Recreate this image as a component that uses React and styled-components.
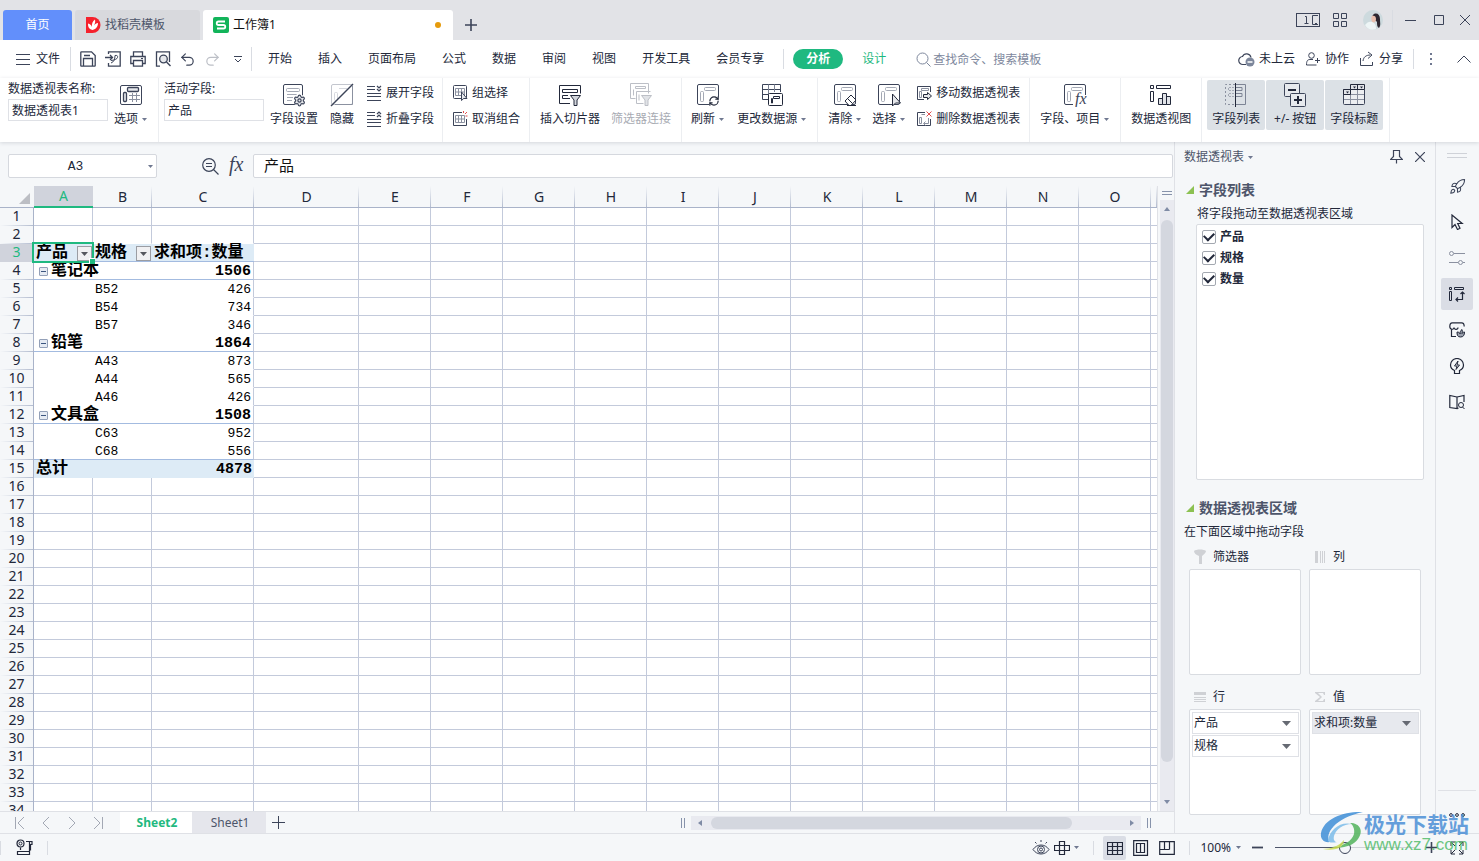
import React, { useState } from 'react';
import styled, { createGlobalStyle, css } from 'styled-components';
import { Settings, Rocket, RefreshCw, Undo2, Redo2 } from 'lucide-react';

const GlobalStyle = createGlobalStyle`
  * {
    box-sizing: border-box;
  }

  body {
    margin: 0;
    font-family: 'Noto Sans', 'Noto Sans CJK SC', sans-serif;
    font-size: 12px;
    line-height: 16px;
    color: #22283a;
    background: #f5f7f9;
  }

  button,
  input {
    font: inherit;
    color: inherit;
  }

  button {
    padding: 0;
    border: 0;
    background: none;
    white-space: nowrap;
  }

  svg {
    display: block;
    flex: none;
  }
`;

/* ---------- icons ---------- */

const Icon = ({ w = 16, h = w, box = `0 0 ${w} ${h}`, color = '#3c4459', children }) => (
  <svg width={w} height={h} viewBox={box} fill="none" stroke={color} strokeWidth="1" aria-hidden="true">
    {children}
  </svg>
);

const Caret = ({ color = '#6f7890' }) => (
  <Icon w={5} h={3} color="none">
    <path d="M0 0h5L2.5 3z" fill={color} />
  </Icon>
);

const PivotFrame = ({ light = '#a3a8b4' }) => (
  <>
    <rect x="1.5" y="1.5" width="21" height="20" rx="1.5" fill="#fff" />
    <rect x="8.5" y="4.5" width="11" height="3" rx="1" stroke={light} />
    <rect x="4.5" y="8.5" width="3" height="10" rx="1" stroke={light} />
  </>
);

const OptionsIcon = () => (
  <Icon w={24}>
    <rect x="1.5" y="2.5" width="21" height="19" rx="1.5" />
    <rect x="8.5" y="4.5" width="11" height="4" rx="1" fill="#e6e8ec" strokeWidth="1.3" />
    <rect x="4.5" y="9.5" width="3" height="9" rx="1" fill="#e6e8ec" strokeWidth="1.3" />
    <path d="M13.5 10v9M17.5 10v9M10 12.5h11M10 16.5h11" stroke="#8b91a0" />
  </Icon>
);

const FieldSettingsIcon = () => (
  <Icon w={24}>
    <rect x="1.5" y="1.5" width="19" height="20" rx="1.5" fill="#fff" />
    <rect x="4.5" y="5.5" width="13" height="3" rx="1" stroke="#a3a8b4" />
    <path d="M5 11.5h10M5 14.5h6M5 17.5h5" stroke="#a3a8b4" />
    <circle cx="17" cy="17" r="6" fill="#fff" stroke="none" />
    <Settings x="11" y="11" width="13" height="13" strokeWidth={2.2} color="#3c4459" fill="#e6e8ec" />
  </Icon>
);

const HideIcon = () => (
  <Icon w={24}>
    <rect x="1.5" y="1.5" width="21" height="20" rx="1.5" stroke="#c3c6ce" />
    <rect x="4.5" y="9.5" width="3" height="8" rx="1" stroke="#d5d7dd" />
    <path d="M9 5.5h8" stroke="#d5d7dd" />
    <path d="M22.5 3v18.5H5" stroke="#8b91a0" />
    <path d="M1 23L23 1" strokeWidth="1.4" />
  </Icon>
);

const ExpandIcon = ({ up }) => (
  <Icon>
    <path d="M1 1.5h8M1 4.5h8M1 8.5h14M1 11.5h14M1 15.5h14" />
    {up ? (
      <path d="M11 3l2-2 2 2M11 6l2-2 2 2" strokeWidth="1.2" />
    ) : (
      <path d="M11 1l2 2 2-2M11 4l2 2 2-2" strokeWidth="1.2" />
    )}
  </Icon>
);

const GroupIcon = () => (
  <Icon>
    <rect x="1.5" y="0.5" width="13" height="13" rx="1" />
    <path d="M3.5 3.5h9v7h-9zM6.5 3.5v7M9.5 3.5v7M3.5 7h9" stroke="#8b91a0" />
    <path d="M9.5 7v8.500l2.200-2h3.300z" fill="#e6e8ec" />
  </Icon>
);

const UngroupIcon = () => (
  <Icon>
    <path d="M10 1.5H1.5v13h13V8" />
    <path d="M3.5 4.5h9v7h-9zM6.5 4.5v7M9.5 4.5v7M3.5 8h9" stroke="#8b91a0" />
    <path d="M11.5 0v2M13 3l2-2M13.5 5h2" stroke="#e04f4f" />
  </Icon>
);

const Funnel = ({ fill = '#d3d6dc' }) => <path d="M12.5 12.5h10l-3.500 4.500v5.500h-3V17z" fill={fill} />;

const SlicerIcon = () => (
  <Icon w={24} color="#22283a">
    <path d="M22.5 10.500v-8h-21v18H12" />
    <path d="M4.5 6.500h15v3h-15zM10 12.500H4.500v3H12" />
    <Funnel />
  </Icon>
);

const FilterLinkIcon = () => (
  <Icon w={24} color="#bcbfc6">
    <path d="M19.5 10.500v-10h-18v15h5" />
    <path d="M7.5 15v-6.500h14M7.5 15v5.500h7M6.500 3.500h10v2h-10zM4.500 6.500v6M10 11.500v6" />
    <Funnel fill="#e1e3e7" />
  </Icon>
);

const RefreshIcon = () => (
  <Icon w={24}>
    <PivotFrame />
    <circle cx="18" cy="18" r="6" fill="#fff" stroke="none" />
    <RefreshCw x="12.5" y="12.5" width="11" height="11" strokeWidth={2.6} color="#22283a" />
  </Icon>
);

const SourceIcon = () => (
  <Icon w={24}>
    <path d="M8 16.500H2.500v-15h18V9M2.500 6.500h18M2.500 11.500h6" />
    <path d="M8.500 1.500v15M14.500 1.500V9" stroke="#7d8495" />
    <rect x="8.500" y="10.500" width="14" height="12" rx="1" fill="#fff" stroke="#22283a" />
    <path d="M13.500 13.500h6v2h-6zM11.500 15.500h1v4.500h-1z" stroke="#22283a" />
  </Icon>
);

const ClearIcon = () => (
  <Icon w={24}>
    <PivotFrame />
    <path d="M12 18l6-6 5 5-5 5.500h-2z" fill="#fff" stroke="#22283a" />
    <path d="M14.500 15.500l5 5M14 22.500h9" stroke="#22283a" />
  </Icon>
);

const SelectIcon = () => (
  <Icon w={24}>
    <PivotFrame />
    <path d="M15.500 11v12l3-3H23.500z" fill="#e6e8ec" stroke="#22283a" />
  </Icon>
);

const MovePivotIcon = () => (
  <Icon>
    <path d="M8 14.500H1.500v-13h13V7" />
    <path d="M5.500 3.500h7v2h-7zM3.500 6.500h2v6h-2z" stroke="#8b91a0" />
    <path d="M7.500 9.500h4V7.500l4 3.500-4 3.500v-2h-4z" fill="#e6e8ec" stroke="#22283a" />
  </Icon>
);

const DeletePivotIcon = () => (
  <Icon>
    <path d="M9 1.500H1.500v13h13V8" />
    <path d="M5.500 3.500H9M3.500 6.500h2v6h-2zM12.500 7v5.500H8M9.500 10.500l-2 2 2 2" stroke="#8b91a0" />
    <path d="M10.500 0.500l5 5M15.500 0.500l-5 5" stroke="#e04f4f" />
  </Icon>
);

const FxGlyph = styled.text`
  font-family: 'Liberation Serif', serif;
  font-size: ${(p) => p.$size}px;
  font-style: italic;
  stroke: none;
  fill: #3c4459;
`;

const CalcFieldIcon = () => (
  <Icon w={24}>
    <PivotFrame />
    <path d="M10 12h14v12H10z" fill="#fff" stroke="none" />
    <FxGlyph $size={16} x="12" y="21">fx</FxGlyph>
  </Icon>
);

const PivotChartIcon = () => (
  <Icon w={24} color="#22283a">
    <path d="M1.500 2.500h3v3h-3zM7.500 2.500h14v3h-14zM1.500 8.500h3v10h-3z" />
    <path d="M9.500 15.500h4v6h-4zM13.500 10.500h4v11h-4zM17.500 13.500h4v8h-4z" fill="#e1e3e8" />
  </Icon>
);

const FieldListIcon = () => (
  <Icon w={24}>
    <path d="M11 1.500H1.500v20H11" strokeDasharray="2 2" stroke="#8b91a0" />
    <path d="M12 1.500h9.500v20H12M12 4.500h6v3h-6M12 10.500h6v3h-6" stroke="#7d8495" />
    <path d="M10 4.500H4.500v3H10M10 10.500H4.500v3H10" strokeDasharray="2 1" stroke="#a3a8b4" />
    <path d="M11.500 0v24" stroke="#22283a" />
  </Icon>
);

const PlusMinusIcon = () => (
  <Icon w={24}>
    <rect x="1.500" y="0.500" width="15" height="13" rx="1" fill="#e6e9ed" />
    <rect x="7.500" y="10.500" width="15" height="13" rx="1" fill="#e6e9ed" />
    <path d="M5 7h8M11 17h8M15 13v8" stroke="#22283a" strokeWidth="2" />
  </Icon>
);

const FieldTitleIcon = () => (
  <Icon w={24}>
    <path d="M1.500 6.500h21v14a1 1 0 0 1-1 1h-19a1 1 0 0 1-1-1z" fill="#eceef1" />
    <path d="M8.500 6v15M15.500 6v15M2 11.500h20M2 16.500h20" stroke="#8b91a0" />
    <path d="M8.500 1.500h14v5h-14zM1.500 6.500h7v5h-7zM15.500 1.500v5" fill="#e1e3e8" stroke="#22283a" />
    <path d="M11 3.500h3l-1.500 2zM18 3.500h3l-1.500 2zM4 8.500h3l-1.500 2z" fill="#22283a" stroke="none" />
  </Icon>
);

const DocerLogo = () => (
  <Icon w={16} color="none">
    <path d="M1 0h6.500a8 8 0 0 1 0 16H1z" fill="#f5222d" />
    <path d="M7.500 13C3.500 12 3 9.500 3 6.500 5 7 6.500 8 7 10 6.500 7 7.500 4 10 2.500c.5 2.500 0 4-1 6 1-1.500 2.500-2.500 4-2.500 0 3-1.500 6-5.500 7z" fill="#fff" />
  </Icon>
);

const SheetLogo = () => (
  <Icon w={16} color="none">
    <rect width="16" height="16" rx="2" fill="#12b45a" />
    <path d="M12 4.500H5.500a1.700 1.700 0 0 0 0 3.500h5a1.700 1.700 0 0 1 0 3.500H4" stroke="#fff" strokeWidth="1.8" />
  </Icon>
);

const SaveIcon = () => (
  <Icon>
    <path d="M0.800 1.500a0.700 0.700 0 0 1 0.700-0.700h10l3.700 3.700v10a0.700 0.700 0 0 1-0.700 0.700h-13a0.700 0.700 0 0 1-0.700-0.700z" strokeWidth="1.3" />
    <path d="M3.500 15V7.500h9V15M4 4.500h6" strokeWidth="1.3" />
  </Icon>
);

const ExportIcon = () => (
  <Icon>
    <path d="M3.500 3V0.800h11.700v14.400H3.500V12" strokeWidth="1.3" />
    <path d="M0 6.500h7M5 4l2.500 2.500L5 9" strokeWidth="1.3" />
    <path d="M6 12c3-1 4-4 4-7.500 2-0.500 3 0.500 2.500 2S10 9 6 9.500" />
  </Icon>
);

const PrintIcon = () => (
  <Icon>
    <path d="M3.500 5V0.800h9V5M3 12.500H0.800V5.500h14.400v7H13" strokeWidth="1.3" />
    <path d="M3.500 9.500h9v5.700h-9z" strokeWidth="1.3" />
    <path d="M11 7.500h2" />
  </Icon>
);

const PreviewIcon = () => (
  <Icon>
    <path d="M5 15.200H1.500V0.800h13V11" strokeWidth="1.3" />
    <circle cx="8.500" cy="8" r="3.800" strokeWidth="1.3" fill="#e6e8ec" />
    <path d="M11.500 11l4 4" strokeWidth="1.5" />
  </Icon>
);

const MoreIcon = () => (
  <Icon w={8} h={7}>
    <path d="M0 0.500h8M1 3l3 3 3-3" />
  </Icon>
);

const CloudIcon = () => (
  <Icon w={17} h={15}>
    <path d="M8 12.500H5a4 4 0 0 1-0.500-8 4.500 4.500 0 0 1 8.500 1" strokeWidth="1.2" />
    <circle cx="12" cy="10" r="4.500" fill="#7c869b" stroke="none" />
    <path d="M9.500 10h5" stroke="#fff" strokeWidth="1.5" />
  </Icon>
);

const CollabIcon = () => (
  <Icon>
    <circle cx="6.500" cy="4.500" r="2.800" />
    <path d="M8 8.500H5c-2.500 0-3.500 1.500-3.500 5.500h10M10 9.500h5M12.500 7v5" />
  </Icon>
);

const ShareIcon = () => (
  <Icon>
    <path d="M1.500 7v7.500h12V11M4 10c0.500-4 3-6 7.500-6M9 1l4 3-4 3.500" />
  </Icon>
);

const RailIcon = ({ name }) => {
  switch (name) {
    case 'rocket':
      return <Rocket width={17} height={17} strokeWidth={1.5} color="#3c4459" />;
    case 'pointer':
      return (
        <Icon color="#22283a">
          <path d="M3 1v12.500l3-3 2.500 5 2.500-1.200-2.300-4.800h4.500z" strokeWidth="1.2" />
        </Icon>
      );
    case 'sliders':
      return (
        <Icon color="#8b91a0">
          <circle cx="2.500" cy="3.500" r="2" />
          <circle cx="11.500" cy="12.500" r="2" />
          <path d="M5 3.500h11M0 12.500h9M14 12.500h2" />
        </Icon>
      );
    case 'pivot':
      return (
        <Icon color="#22283a">
          <path d="M0.500 1.500h2v2h-2zM5.500 1.500h9v2h-9zM0.500 5.500h2v9h-2z" />
          <path d="M13.500 6v7.500H7M11.500 8l2-2 2 2M9 11.500l-2 2 2 2" strokeWidth="1.2" />
        </Icon>
      );
    case 'store':
      return (
        <Icon color="#22283a">
          <path d="M2.500 7v7.500H7M0.800 4.500c0-2 0.700-3.700 2.500-3.700h9.400c1.800 0 2.500 1.700 2.500 3.700M0.800 4.500c0 3.500 4.200 3.500 4.200 1 0 2.500 4 2.500 4 0" strokeWidth="1.2" />
          <path d="M11.500 15c-3 0-3.500-2-3.500-5 2 0 3 1 3 2 0-2 0.500-3.500 2-4.500 0.500 1 0.500 2.500 0 4 0.500-1 1.500-1.500 2.500-1.500 0 3-1 5-4 5z" fill="#9aa0ad" />
        </Icon>
      );
    case 'idea':
      return (
        <Icon color="#22283a">
          <path d="M5.500 12.500C3 11.500 1.500 9.500 1.500 7a6.500 6.500 0 0 1 13 0c0 2.500-1.500 4.500-4 5.500v3h-5z" strokeWidth="1.2" />
          <path d="M9 3L5.500 8H8l-1 3.500L10.500 7H8z" />
        </Icon>
      );
    default:
      return (
        <Icon color="#22283a">
          <path d="M8 3L0.800 1.500v12L8 14.500zM8 3l7-1.500V8M8 14.500l1.500-0.300" strokeWidth="1.2" />
          <circle cx="12" cy="11" r="2.500" />
          <path d="M13.500 13l2 2" />
        </Icon>
      );
  }
};

/* ---------- shell ---------- */

const Window = styled.div`
  position: relative;
  display: flex;
  flex-direction: column;
  height: 100vh;
  overflow: hidden;
`;

const Divider = styled.span`
  flex: none;
  width: 1px;
  height: ${(p) => p.$h || 20}px;
  background: #d9dce2;
`;

const Spacer = styled.div`
  flex: 1;
`;

const IconButton = styled.button`
  display: flex;
  align-items: center;
  justify-content: center;
  flex: none;
  width: ${(p) => p.$w}px;
  height: ${(p) => p.$h || 24}px;
`;

/* ---------- title bar ---------- */

const TitleBar = styled.header`
  display: flex;
  align-items: flex-end;
  flex: none;
  height: 40px;
  padding-left: 3px;
  background: #e2e3e7;
`;

const DocTab = styled.button`
  display: flex;
  align-items: center;
  justify-content: ${(p) => (p.$home ? 'center' : 'flex-start')};
  gap: 4px;
  width: ${(p) => p.$w}px;
  height: 30px;
  margin-right: 3px;
  padding: ${(p) => (p.$home ? 0 : '0 12px 0 10px')};
  border-radius: 3px 3px 0 0;
  color: ${(p) => (p.$home ? '#fff' : p.$active ? '#111' : '#4d556a')};
  background: ${(p) => (p.$home ? '#628ffb' : p.$active ? '#fff' : '#d8d9dd')};
`;

const UnsavedDot = styled.span`
  width: 6px;
  height: 6px;
  margin-left: auto;
  border-radius: 50%;
  background: #e69b0c;
`;

const WindowTools = styled.div`
  display: flex;
  align-items: center;
  height: 40px;
  margin-left: auto;
`;

const AvatarButton = styled(IconButton)`
  margin: 0 9px 0 7px;
`;

const TitleBarView = () => (
  <TitleBar>
    <DocTab $home $w={69}>首页</DocTab>
    <DocTab $w={125}>
      <DocerLogo />
      找稻壳模板
    </DocTab>
    <DocTab $active $w={250}>
      <SheetLogo />
      工作簿1
      <UnsavedDot />
    </DocTab>
    <IconButton $w={30} $h={30} aria-label="新建">
      <Icon w={12}>
        <path d="M6 0v12M0 6h12" strokeWidth="1.6" />
      </Icon>
    </IconButton>
    <WindowTools>
      <IconButton $w={32} aria-label="窗口">
        <Icon w={24} h={14}>
          <rect x="0.500" y="0.500" width="23" height="13" />
          <path d="M9 3.500h1.500v7M8.500 10.500h4M22 2.500h-5.500v9h5.500M19 10.500h2" />
        </Icon>
      </IconButton>
      <IconButton $w={32} aria-label="应用">
        <Icon w={14}>
          <path d="M0.500 0.500h5v5h-5zM8.500 0.500h5v5h-5zM0.500 8.500h5v5h-5zM8.500 8.500h5v5h-5z" />
        </Icon>
      </IconButton>
      <AvatarButton $w={20} aria-label="账号">
        <Icon w={20} color="none">
          <circle cx="10" cy="10" r="10" fill="#cddade" />
          <path d="M11 4c3-1.500 6 0.500 6 5s1 6-1 9c-2-1-2-3-2-6-1-2-3-1-4-2-1-2-1-5 1-6z" fill="#2c2630" />
          <path d="M9 6c2-1 4 0 4 3s-2 4-3.500 3S8 7 9 6z" fill="#e8bfae" />
          <path d="M2 15c2-3 5-4 7-3 3 1 4 3 4 7-4 2-9 0-11-4z" fill="#eef5f6" />
        </Icon>
      </AvatarButton>
      <Divider $h={20} />
      <IconButton $w={34} aria-label="最小化">
        <Icon w={11}>
          <path d="M0 5.500h11" />
        </Icon>
      </IconButton>
      <IconButton $w={24} aria-label="最大化">
        <Icon w={10}>
          <path d="M0.500 0.500h9v9h-9z" />
        </Icon>
      </IconButton>
      <IconButton $w={28} aria-label="关闭">
        <Icon w={10}>
          <path d="M0 0l10 10M10 0L0 10" />
        </Icon>
      </IconButton>
    </WindowTools>
  </TitleBar>
);

/* ---------- menu bar ---------- */

const MenuBar = styled.nav`
  display: flex;
  align-items: center;
  flex: none;
  height: 38px;
  background: #fff;
`;

const FileButton = styled.button`
  display: flex;
  align-items: center;
  gap: 6px;
  margin: 0 10px 0 16px;
`;

const QuickTools = styled.div`
  display: flex;
  padding: 0 1px 0 4px;
`;

const MenuList = styled.div`
  display: flex;
  gap: 26px;
  padding: 0 19px 0 16px;
`;

const ContextTab = styled.button`
  margin-left: ${(p) => (p.$active ? 9 : 6)}px;
  width: 50px;
  height: 20px;
  border-radius: 10px;
  color: ${(p) => (p.$active ? '#fff' : '#1fb980')};
  font-weight: ${(p) => (p.$active ? 700 : 400)};
  background: ${(p) => (p.$active ? '#1fb980' : 'transparent')};
`;

const Search = styled.label`
  display: flex;
  align-items: center;
  gap: 2px;
  margin-left: 17px;

  input {
    width: 130px;
    height: 20px;
    padding: 0;
    border: 0;
    outline: 0;
    background: none;
  }

  input::placeholder {
    color: #7e889d;
    opacity: 1;
  }
`;

const CloudButton = styled.button`
  display: flex;
  align-items: center;
  gap: 4px;
  margin-right: 10px;
`;

const MENUS = ['开始', '插入', '页面布局', '公式', '数据', '审阅', '视图', '开发工具', '会员专享'];

const MenuBarView = () => (
  <MenuBar>
    <FileButton>
      <Icon w={14}>
        <path d="M0 2.500h14M0 7.500h14M0 12.500h14" />
      </Icon>
      文件
    </FileButton>
    <Divider $h={24} />
    <QuickTools>
      <IconButton $w={25} aria-label="保存"><SaveIcon /></IconButton>
      <IconButton $w={25} aria-label="输出为PDF"><ExportIcon /></IconButton>
      <IconButton $w={25} aria-label="打印"><PrintIcon /></IconButton>
      <IconButton $w={25} aria-label="打印预览"><PreviewIcon /></IconButton>
      <IconButton $w={25} aria-label="撤销"><Undo2 size={17} strokeWidth={1.7} color="#3c4459" /></IconButton>
      <IconButton $w={25} aria-label="恢复"><Redo2 size={17} strokeWidth={1.7} color="#bcbfc6" /></IconButton>
      <IconButton $w={25} aria-label="更多"><MoreIcon /></IconButton>
    </QuickTools>
    <Divider $h={24} />
    <MenuList>
      {MENUS.map((name) => (
        <button key={name}>{name}</button>
      ))}
    </MenuList>
    <Divider />
    <ContextTab $active>分析</ContextTab>
    <ContextTab>设计</ContextTab>
    <Search>
      <Icon w={15} color="#7e889d">
        <circle cx="6.500" cy="6.500" r="5.500" />
        <path d="M10.500 10.500l4 4" />
      </Icon>
      <input placeholder="查找命令、搜索模板" aria-label="搜索" />
    </Search>
    <Spacer />
    <CloudButton><CloudIcon />未上云</CloudButton>
    <CloudButton><CollabIcon />协作</CloudButton>
    <CloudButton><ShareIcon />分享</CloudButton>
    <Divider />
    <IconButton $w={34} aria-label="更多选项">
      <Icon w={2} h={12} color="none">
        <path d="M0 0h2v2H0zM0 5h2v2H0zM0 10h2v2H0z" fill="#6f7890" />
      </Icon>
    </IconButton>
    <IconButton $w={31} aria-label="折叠功能区">
      <Icon w={14} h={8}>
        <path d="M0.500 7.500L7 1l6.500 6.500" />
      </Icon>
    </IconButton>
  </MenuBar>
);

/* ---------- ribbon ---------- */

const Ribbon = styled.section`
  position: relative;
  z-index: 1;
  display: flex;
  flex: none;
  height: 64px;
  background: #fff;
  box-shadow: 0 1px 4px rgba(40, 50, 70, 0.16);
`;

const Group = styled.div`
  display: flex;
  align-items: flex-start;
  gap: ${(p) => p.$gap || 11}px;
  padding: 2px ${(p) => p.$end || 10}px 0 ${(p) => p.$start || 10}px;
  border-right: 1px solid #eceef1;
`;

const ButtonRow = styled.div`
  display: flex;
  gap: 12px;
`;

const Field = styled.label`
  display: flex;
  flex-direction: column;
  gap: 2px;
  width: 100px;
  padding-top: 1px;
  white-space: nowrap;

  input {
    width: 100px;
    height: 22px;
    padding: 0 3px;
    border: 1px solid #dfe1e6;
    background: #fff;
  }
`;

const BigButtonBox = styled.button`
  display: flex;
  flex-direction: column;
  align-items: center;
  gap: 4px;
  height: 50px;
  padding-top: 3px;
  border-radius: 2px;
  color: ${(p) => (p.disabled ? '#a8abb3' : 'inherit')};

  ${(p) =>
    p.$toggled &&
    css`
      width: 58px;
      background: #dce1e6;
    `}

  span {
    display: flex;
    align-items: center;
    gap: 4px;
  }
`;

const BigButton = ({ icon, label, menu, toggled, disabled }) => (
  <BigButtonBox $toggled={toggled} disabled={disabled} aria-pressed={toggled}>
    {icon}
    <span>
      {label}
      {menu && <Caret />}
    </span>
  </BigButtonBox>
);

const Stack = styled.div`
  display: flex;
  flex-direction: column;
  gap: 1px;

  button {
    display: flex;
    align-items: center;
    gap: 4px;
    height: 25px;
  }
`;

const RibbonView = () => (
  <Ribbon>
    <Group $gap={6} $start={8} $end={11}>
      <Field>
        数据透视表名称:
        <input defaultValue="数据透视表1" />
      </Field>
      <BigButton icon={<OptionsIcon />} label="选项" menu />
    </Group>
    <Group $gap={6} $start={5} $end={8}>
      <Field>
        活动字段:
        <input defaultValue="产品" />
      </Field>
      <ButtonRow>
        <BigButton icon={<FieldSettingsIcon />} label="字段设置" />
        <BigButton icon={<HideIcon />} label="隐藏" />
        <Stack>
          <button><ExpandIcon />展开字段</button>
          <button><ExpandIcon up />折叠字段</button>
        </Stack>
      </ButtonRow>
    </Group>
    <Group $start={9} $end={9}>
      <Stack>
        <button><GroupIcon />组选择</button>
        <button><UngroupIcon />取消组合</button>
      </Stack>
    </Group>
    <Group>
      <BigButton icon={<SlicerIcon />} label="插入切片器" />
      <BigButton icon={<FilterLinkIcon />} label="筛选器连接" disabled />
    </Group>
    <Group $start={9} $gap={13} $end={11}>
      <BigButton icon={<RefreshIcon />} label="刷新" menu />
      <BigButton icon={<SourceIcon />} label="更改数据源" menu />
    </Group>
    <Group $end={9}>
      <BigButton icon={<ClearIcon />} label="清除" menu />
      <BigButton icon={<SelectIcon />} label="选择" menu />
      <Stack>
        <button><MovePivotIcon />移动数据透视表</button>
        <button><DeletePivotIcon />删除数据透视表</button>
      </Stack>
    </Group>
    <Group $end={11}>
      <BigButton icon={<CalcFieldIcon />} label="字段、项目" menu />
    </Group>
    <Group>
      <BigButton icon={<PivotChartIcon />} label="数据透视图" />
    </Group>
    <Group $gap={1} $start={5} $end={6}>
      <BigButton icon={<FieldListIcon />} label="字段列表" toggled />
      <BigButton icon={<PlusMinusIcon />} label="+/- 按钮" toggled />
      <BigButton icon={<FieldTitleIcon />} label="字段标题" toggled />
    </Group>
  </Ribbon>
);

/* ---------- formula bar ---------- */

const Workspace = styled.div`
  display: grid;
  grid-template-columns: minmax(0, 1fr) 261px 44px;
  flex: 1;
  min-height: 0;
`;

const SheetArea = styled.main`
  display: flex;
  flex-direction: column;
  min-height: 0;
`;

const FormulaBar = styled.div`
  display: flex;
  align-items: center;
  flex: none;
  height: 44px;
  padding: 4px 1px 0 8px;
`;

const NameBox = styled.div`
  display: flex;
  align-items: center;
  width: 149px;
  height: 24px;
  padding-right: 3px;
  border: 1px solid #d5d8de;
  border-radius: 2px;
  background: #fff;

  input {
    flex: 1;
    min-width: 0;
    padding: 2px 6px 0 0;
    border: 0;
    outline: 0;
    font-family: 'Liberation Mono', monospace;
    font-size: 13px;
    text-align: center;
    background: none;
  }
`;

const FormulaTools = styled.div`
  display: flex;
  padding: 0 4px 0 41px;
`;

const FormulaInput = styled.input`
  flex: 1;
  min-width: 0;
  height: 24px;
  padding: 0 10px 4px;
  border: 1px solid #d5d8de;
  border-radius: 2px;
  outline: 0;
  font-size: 15px;
  color: #111;
  background: #fff;
`;

/* ---------- grid ---------- */

const GridRow = styled.div`
  display: flex;
  flex: 1;
  min-height: 0;
`;

const GridClip = styled.div`
  flex: 1;
  min-width: 0;
  overflow: hidden;
`;

const SheetTable = styled.table`
  width: 100%;
  table-layout: fixed;
  border-spacing: 0;
  background: #fff;
`;

const ColHead = styled.th`
  height: 22px;
  padding: 0;
  border-bottom: ${(p) => (p.$on ? '2px solid #1fb980' : '1px solid #a9b3c9')};
  font-size: 14px;
  font-weight: 400;
  color: ${(p) => (p.$on ? '#1fb980' : '#22283a')};
  background: ${(p) =>
    p.$on
      ? '#d0d3dc'
      : 'linear-gradient(#f5f7f9, #b4bdd0) right / 1px 100% no-repeat, #f5f7f9'};
`;

const RowHead = styled.th`
  height: 18px;
  padding: 0 0 3px;
  border-right: 1px solid #a9b3c9;
  font-size: 14px;
  font-weight: 400;
  line-height: 15px;
  color: ${(p) => (p.$on ? '#1fb980' : '#22283a')};
  background: ${(p) =>
    p.$on
      ? '#d0d3dc'
      : 'linear-gradient(90deg, #f5f7f9, #b4bdd0) bottom / 100% 1px no-repeat, #f5f7f9'};
`;

const Corner = styled.th`
  padding: 0 4px 3px 0;
  border-bottom: 1px solid #a9b3c9;
  vertical-align: bottom;
  background: #f5f7f9;

  svg {
    margin-left: auto;
  }
`;

const Cell = styled.td`
  position: relative;
  height: 18px;
  padding: 2px 2px 0;
  border-right: ${(p) => (p.$open ? '0' : '1px solid #c3cadb')};
  border-bottom: 1px solid ${(p) => (p.$rule ? '#a3bbe0' : p.$flat ? 'transparent' : '#c3cadb')};
  font-family: 'Liberation Mono', 'Noto Sans CJK SC', monospace;
  font-size: ${(p) => (p.$bold ? 15 : 13)}px;
  font-weight: ${(p) => (p.$bold ? 700 : 400)};
  line-height: 15px;
  text-align: ${(p) => (p.$num ? 'right' : 'left')};
  vertical-align: bottom;
  white-space: nowrap;
  color: #000;
  background: ${(p) => (p.$fill ? '#ddebf6' : 'transparent')};
`;

const CellLine = styled.div`
  display: flex;
  align-items: center;
  gap: 3px;
  height: 15px;
  padding-left: ${(p) => p.$inset || 0}px;
  font-size: 16px;
  line-height: 17px;
`;

const FilterButton = styled.button`
  display: flex;
  align-items: center;
  justify-content: center;
  width: 15px;
  height: 15px;
  margin: 0 -1px 0 auto;
  border: 1px solid #9b9da3;
  background: #f0f0f2;
`;

const FoldButton = styled.button`
  display: flex;
  align-items: center;
  justify-content: center;
  flex: none;
  width: 9px;
  height: 9px;
  border: 1px solid #93a0b8;
  border-radius: 1px;
  background: #e6ebf3;
`;

const Selection = styled.span`
  position: absolute;
  inset: -2px -1px -2px -2px;
  z-index: 1;
  border: 2px solid #1fb980;
  pointer-events: none;

  &::after {
    content: '';
    position: absolute;
    right: -3px;
    bottom: -3px;
    width: 5px;
    height: 5px;
    border-top: 1px solid #fff;
    border-left: 1px solid #fff;
    background: #1fb980;
  }
`;

const COLUMNS = 'ABCDEFGHIJKLMNO'.split('');
const COLUMN_WIDTHS = { A: 59, B: 59, C: 102, D: 105 };
const ROW_COUNT = 34;

const PIVOT = {
  3: { kind: 'head' },
  4: { kind: 'group', name: '笔记本', total: 1506 },
  5: { kind: 'item', name: 'B52', total: 426 },
  6: { kind: 'item', name: 'B54', total: 734 },
  7: { kind: 'item', name: 'B57', total: 346 },
  8: { kind: 'group', name: '铅笔', total: 1864 },
  9: { kind: 'item', name: 'A43', total: 873 },
  10: { kind: 'item', name: 'A44', total: 565 },
  11: { kind: 'item', name: 'A46', total: 426 },
  12: { kind: 'group', name: '文具盒', total: 1508 },
  13: { kind: 'item', name: 'C63', total: 952 },
  14: { kind: 'item', name: 'C68', total: 556, last: true },
  15: { kind: 'total', name: '总计', total: 4878 },
};

const Filter = ({ label }) => (
  <FilterButton aria-label={label}>
    <Icon w={7} h={4} color="none">
      <path d="M0 0h7L3.500 4z" fill="#55575e" />
    </Icon>
  </FilterButton>
);

const PivotCells = ({ row }) => {
  const { kind, name, total, last } = row;
  if (kind === 'head') {
    return (
      <>
        <Cell $open $rule $fill $bold>
          <CellLine>产品<Filter label="筛选产品" /></CellLine>
          <Selection />
        </Cell>
        <Cell $open $rule $fill $bold>
          <CellLine>规格<Filter label="筛选规格" /></CellLine>
        </Cell>
        <Cell $open $rule $fill $bold>
          <CellLine>求和项:数量</CellLine>
        </Cell>
      </>
    );
  }
  if (kind === 'item') {
    return (
      <>
        <Cell $open $flat $rule={last} />
        <Cell $open $flat $rule={last}>{name}</Cell>
        <Cell $flat $rule={last} $num>{total}</Cell>
      </>
    );
  }
  const isTotal = kind === 'total';
  return (
    <>
      <Cell $open $flat $rule={!isTotal} $fill={isTotal} $bold>
        <CellLine $inset={isTotal ? 0 : 3}>
          {!isTotal && (
            <FoldButton aria-label="折叠">
              <Icon w={5} h={1} color="none">
                <path d="M0 0h5v1H0z" fill="#3c5680" />
              </Icon>
            </FoldButton>
          )}
          {name}
        </CellLine>
      </Cell>
      <Cell $open $flat $rule={!isTotal} $fill={isTotal} />
      <Cell $open={isTotal} $flat $rule={!isTotal} $fill={isTotal} $bold $num>{total}</Cell>
    </>
  );
};

const Grid = () => (
  <SheetTable>
    <colgroup>
      <col width={34} />
      {COLUMNS.map((c) => (
        <col key={c} width={COLUMN_WIDTHS[c] || 72} />
      ))}
      <col />
    </colgroup>
    <thead>
      <tr>
        <Corner>
          <Icon w={11} color="none">
            <path d="M11 0v11H0z" fill="#bcbec4" />
          </Icon>
        </Corner>
        {COLUMNS.map((c) => (
          <ColHead key={c} $on={c === 'A'}>{c}</ColHead>
        ))}
        <ColHead />
      </tr>
    </thead>
    <tbody>
      {Array.from({ length: ROW_COUNT }, (_, i) => i + 1).map((n) => (
        <tr key={n}>
          <RowHead $on={n === 3}>{n}</RowHead>
          {PIVOT[n] ? (
            <PivotCells row={PIVOT[n]} />
          ) : (
            ['A', 'B', 'C'].map((c) => <Cell key={c} $flat={n === 2} />)
          )}
          {COLUMNS.slice(3).map((c) => (
            <Cell key={c} />
          ))}
          <Cell $open />
        </tr>
      ))}
    </tbody>
  </SheetTable>
);

const VerticalBar = styled.div`
  display: flex;
  flex-direction: column;
  align-items: center;
  flex: none;
  width: 17px;
  padding: 4px 1px 0 2px;
  border-left: 1px solid #dfe1e6;
`;

const ScrollTrack = styled.div`
  display: flex;
  flex-direction: ${(p) => (p.$row ? 'row' : 'column')};
  align-items: center;
  gap: 9px;
  flex: 1;
  width: ${(p) => (p.$row ? 'auto' : '14px')};
  height: ${(p) => (p.$row ? '14px' : 'auto')};
  padding: ${(p) => (p.$row ? '0 7px' : '7px 0')};
  background: #e9eaf0;
`;

const ScrollThumb = styled.div`
  flex: ${(p) => p.$size} 0 0;
  ${(p) => (p.$row ? 'height: 12px;' : 'width: 12px;')}
  border-radius: 6px;
  background: #d4d7df;
`;

const ScrollGap = styled.div`
  flex: ${(p) => p.$size} 0 0;
`;

/* ---------- sheet tabs ---------- */

const SheetTabs = styled.div`
  display: flex;
  align-items: center;
  flex: none;
  height: 23px;
  border-top: 1px solid #dfe1e6;
  border-bottom: 1px solid #dfe1e6;
`;

const SheetNav = styled.div`
  display: flex;
  padding: 0 9px 0 7px;
`;

const SheetTab = styled.button`
  width: ${(p) => (p.$active ? 72 : 74)}px;
  height: 21px;
  padding-left: 2px;
  font-weight: ${(p) => (p.$active ? 700 : 400)};
  color: ${(p) => (p.$active ? '#1fb980' : '#4d556a')};
  background: ${(p) => (p.$active ? '#fff' : '#e5e6ec')};
`;

const HorizontalBar = styled.div`
  display: flex;
  align-items: center;
  gap: 6px;
  flex: 0 0 42%;
  margin-left: auto;
  padding-right: 23px;
`;

const Arrow = ({ dir }) => {
  const paths = { up: 'M0 4h6L3 0z', down: 'M0 0h6L3 4z', left: 'M4 0v6L0 3z', right: 'M0 0v6l4-3z' };
  const tall = dir === 'left' || dir === 'right';
  return (
    <Icon w={tall ? 4 : 6} h={tall ? 6 : 4} color="none">
      <path d={paths[dir]} fill="#7f8ba5" />
    </Icon>
  );
};

const SplitMark = () => (
  <Icon w={4} h={10} color="#8793ab">
    <path d="M0.500 0v10M3.500 0v10" />
  </Icon>
);

const NAV_PATHS = [
  ['首张', 'M0.500 0v12M9 0L3 6l6 6'],
  ['上一张', 'M8 0L2 6l6 6'],
  ['下一张', 'M2 0l6 6-6 6'],
  ['末张', 'M1 0l6 6-6 6M9.500 0v12'],
];

const SheetView = () => (
  <SheetArea>
    <FormulaBar>
      <NameBox>
        <input defaultValue="A3" aria-label="名称框" />
        <button aria-label="名称列表"><Caret /></button>
      </NameBox>
      <FormulaTools>
        <IconButton $w={25} aria-label="查找">
          <Icon w={17}>
            <circle cx="7" cy="7" r="6.300" strokeWidth="1.2" />
            <path d="M4 5.500h6M4 8.500h6M11.500 11.500l5 5" strokeWidth="1.2" />
          </Icon>
        </IconButton>
        <IconButton $w={26} aria-label="插入函数">
          <Icon w={16} h={20}>
            <FxGlyph $size={20} x="1" y="15">fx</FxGlyph>
          </Icon>
        </IconButton>
      </FormulaTools>
      <FormulaInput defaultValue="产品" aria-label="编辑栏" />
    </FormulaBar>
    <GridRow>
      <GridClip>
        <Grid />
      </GridClip>
      <VerticalBar>
        <Icon w={10} h={10} color="#8793ab">
          <path d="M0 1.500h10M0 4.500h10" />
        </Icon>
        <ScrollTrack>
          <Arrow dir="up" />
          <ScrollThumb $size={544} />
          <ScrollGap $size={20} />
          <Arrow dir="down" />
        </ScrollTrack>
      </VerticalBar>
    </GridRow>
    <SheetTabs>
      <SheetNav>
        {NAV_PATHS.map(([label, d]) => (
          <IconButton key={label} $w={26} aria-label={label}>
            <Icon w={10} h={12} color="#a3a8b4">
              <path d={d} />
            </Icon>
          </IconButton>
        ))}
      </SheetNav>
      <SheetTab $active>Sheet2</SheetTab>
      <SheetTab>Sheet1</SheetTab>
      <IconButton $w={24} aria-label="新建工作表">
        <Icon w={13}>
          <path d="M6.500 0v13M0 6.500h13" />
        </Icon>
      </IconButton>
      <HorizontalBar>
        <SplitMark />
        <ScrollTrack $row>
          <Arrow dir="left" />
          <ScrollThumb $row $size={364} />
          <ScrollGap $size={40} />
          <Arrow dir="right" />
        </ScrollTrack>
        <SplitMark />
      </HorizontalBar>
    </SheetTabs>
  </SheetArea>
);

/* ---------- pivot panel ---------- */

const Panel = styled.aside`
  display: flex;
  flex-direction: column;
  min-height: 0;
  padding: 7px 3px 18px 9px;
  border-left: 1px solid #dfe1e6;
  border-bottom: 1px solid #dfe1e6;
`;

const PanelHead = styled.div`
  display: flex;
  align-items: center;
  height: 16px;
  margin-bottom: 15px;
  color: #4d556a;

  button {
    display: flex;
    align-items: center;
    gap: 4px;
  }
`;

const PanelTitle = styled.h2`
  display: flex;
  align-items: center;
  gap: 5px;
  margin: 0;
  padding-left: 2px;
  font-size: 14px;
  line-height: 20px;
  color: #4d556a;
`;

const PanelNote = styled.p`
  margin: 6px 0 2px ${(p) => p.$inset}px;
`;

const FieldBox = styled.div`
  flex: 1;
  min-height: 80px;
  margin: 0 8px 18px 12px;
  padding: 1px 5px;
  border: 1px solid #d9dce1;
  border-radius: 2px;
  background: #fff;
`;

const CheckRow = styled.label`
  display: flex;
  align-items: center;
  gap: 4px;
  height: 21px;
  font-weight: 700;

  input {
    display: grid;
    place-items: center;
    width: 14px;
    height: 14px;
    margin: 0;
    border: 1px solid #a3a8b0;
    border-radius: 2px;
    appearance: none;
    background: #fff;
  }

  input:checked::after {
    content: '';
    width: 8px;
    height: 5px;
    margin-bottom: 3px;
    border: solid #22283a;
    border-width: 0 0 2px 2px;
    transform: rotate(-45deg);
  }
`;

const Zones = styled.div`
  display: grid;
  grid-template-columns: 1fr 1fr;
  column-gap: 8px;
  row-gap: 10px;
  margin-top: 3px;
  padding: 0 11px 0 5px;
`;

const ZoneHead = styled.div`
  display: flex;
  align-items: center;
  gap: 5px;
  height: 24px;
  padding-left: 3px;
`;

const ZoneBox = styled.div`
  display: flex;
  flex-direction: column;
  gap: 1px;
  height: 106px;
  padding: 2px 1px 2px 2px;
  border: 1px solid #d9dce1;
  border-radius: 2px;
  background: #fff;
`;

const ZoneItem = styled.button`
  display: flex;
  align-items: center;
  justify-content: space-between;
  height: 22px;
  padding: 0 7px 0 1px;
  border: 1px solid #dfe1e6;
  background: ${(p) => (p.$on ? '#e7e9ee' : '#fff')};
`;

const ZONES = [
  { name: '筛选器', icon: <path d="M2 2c2-2 10-2 12 0 0 2-2 3-4 5v8H7V7C4 6 2 4 2 2z" fill="#cfd1d5" /> },
  { name: '列', icon: <path d="M3 2h3v12H3zM8 2h1v12H8zM10 2h1v12h-1zM12 2h1v12h-1z" fill="#cfd1d5" /> },
  { name: '行', icon: <path d="M2 3h12v3H2zM2 8h12v1H2zM2 10h12v1H2zM2 12h12v1H2z" fill="#cfd1d5" />, items: ['产品', '规格'] },
  { name: '值', icon: <path d="M3 3h10v3h-1l-1-2H6l4 4-4 4h5l1-2h1v3H3v-1l5-4-5-4z" fill="#cfd1d5" />, items: ['求和项:数量'] },
];

const PivotPanel = () => {
  const [fields, setFields] = useState({ 产品: true, 规格: true, 数量: true });
  const toggle = (name) => setFields({ ...fields, [name]: !fields[name] });

  return (
    <Panel>
      <PanelHead>
        <button>数据透视表<Caret /></button>
        <Spacer />
        <IconButton $w={24} aria-label="固定">
          <Icon w={13} h={14}>
            <path d="M3.500 0.500h6v6l3 3H0.500l3-3zM6.500 9.500v4" strokeWidth="1.2" />
          </Icon>
        </IconButton>
        <IconButton $w={24} aria-label="关闭面板">
          <Icon w={10}>
            <path d="M0 0l10 10M10 0L0 10" strokeWidth="1.2" />
          </Icon>
        </IconButton>
      </PanelHead>
      <PanelTitle>
        <Icon w={8} color="none"><path d="M8 0v8H0z" fill="#8cc152" /></Icon>
        字段列表
      </PanelTitle>
      <PanelNote $inset={13}>将字段拖动至数据透视表区域</PanelNote>
      <FieldBox>
        {Object.keys(fields).map((name) => (
          <CheckRow key={name}>
            <input type="checkbox" checked={fields[name]} onChange={() => toggle(name)} />
            {name}
          </CheckRow>
        ))}
      </FieldBox>
      <PanelTitle>
        <Icon w={8} color="none"><path d="M8 0v8H0z" fill="#8cc152" /></Icon>
        数据透视表区域
      </PanelTitle>
      <PanelNote $inset={0}>在下面区域中拖动字段</PanelNote>
      <Zones>
        {ZONES.map((zone) => (
          <div key={zone.name}>
            <ZoneHead>
              <Icon color="none">{zone.icon}</Icon>
              {zone.name}
            </ZoneHead>
            <ZoneBox>
              {(zone.items || []).map((item) => (
                <ZoneItem key={item} $on={zone.name === '值'}>
                  {item}
                  <Icon w={9} h={5} color="none">
                    <path d="M0 0h9L4.500 5z" fill="#666a73" />
                  </Icon>
                </ZoneItem>
              ))}
            </ZoneBox>
          </div>
        ))}
      </Zones>
    </Panel>
  );
};

/* ---------- side rail ---------- */

const Rail = styled.aside`
  display: flex;
  flex-direction: column;
  align-items: center;
  gap: 4px;
  min-height: 0;
  padding: 11px 1px 0 0;
  border-left: 1px solid #dfe1e6;
  border-bottom: 1px solid #dfe1e6;
`;

const RailHandle = styled.div`
  width: 20px;
  height: 5px;
  margin-bottom: 8px;
  border: solid #cfd2d8;
  border-width: 1px 0;
`;

const RailButton = styled.button`
  display: flex;
  align-items: center;
  justify-content: center;
  width: 32px;
  height: 32px;
  border-radius: 2px;
  background: ${(p) => (p.$on ? '#dadde5' : 'transparent')};
`;

const RailFoot = styled.div`
  display: flex;
  justify-content: center;
  width: 38px;
  height: 43px;
  margin-top: auto;
  padding-top: 22px;
  border-top: 1px solid #dfe1e6;
`;

const RAIL = [
  ['rocket', '新功能'],
  ['pointer', '选择'],
  ['sliders', '属性'],
  ['pivot', '透视表'],
  ['store', '资源'],
  ['idea', '技巧'],
  ['book', '帮助'],
];

const SideRail = () => (
  <Rail>
    <RailHandle />
    {RAIL.map(([name, label]) => (
      <RailButton key={name} $on={name === 'pivot'} aria-label={label}>
        <RailIcon name={name} />
      </RailButton>
    ))}
    <RailFoot>
      <Icon w={16} h={4} color="#22283a">
        <circle cx="2" cy="2" r="1.400" />
        <circle cx="8" cy="2" r="1.400" />
        <circle cx="14" cy="2" r="1.400" />
      </Icon>
    </RailFoot>
  </Rail>
);

/* ---------- status bar ---------- */

const StatusBar = styled.footer`
  display: flex;
  align-items: center;
  flex: none;
  height: 27px;
  padding-right: 12px;
`;

const ViewButton = styled(IconButton)`
  width: 23px;
  margin-right: ${(p) => p.$after || 0}px;
  border-radius: 2px;
  background: ${(p) => (p.$on ? '#dadde5' : 'transparent')};
`;

const StatusMenu = styled.button`
  display: flex;
  align-items: center;
  gap: ${(p) => p.$gap}px;
  margin: 0 ${(p) => p.$after}px 0 0;
`;

const StatusDivider = styled(Divider)`
  margin: 0 ${(p) => p.$after}px 0 0;
`;

const ZoomSlider = styled.input`
  width: 140px;
  height: 14px;
  margin: 0 0 0 12px;
  appearance: none;
  background: linear-gradient(90deg, #4d556a 50%, #cfd2d8 50%) center / 100% 1px no-repeat;

  &::-webkit-slider-thumb {
    width: 12px;
    height: 12px;
    border: 1px solid #3c4459;
    border-radius: 50%;
    appearance: none;
    background: #f5f7f9;
  }
`;

const StatusBarView = () => (
  <StatusBar>
    <Divider $h={14} />
    <IconButton $w={46} aria-label="宏">
      <Icon w={17} color="#22283a">
        <circle cx="4.500" cy="4.500" r="3.500" strokeWidth="1.2" />
        <circle cx="4.500" cy="4.500" r="1.500" />
        <path d="M10 2.500h6v3h-1.500v6M13.500 2.500V12M4.500 8.500v2.500M1.500 12.500h12v3h-12z" strokeWidth="1.2" />
      </Icon>
    </IconButton>
    <Divider $h={14} />
    <Spacer />
    <ViewButton $after={2} aria-label="护眼模式">
      <Icon w={18} h={16}>
        <path d="M1 9.500c4-6 12-6 16 0-4 6-12 6-16 0zM9 0v2M3 2l1.500 1.500M15 2l-1.500 1.500" />
        <circle cx="9" cy="9.500" r="3.500" />
        <circle cx="9" cy="9.500" r="1.500" />
      </Icon>
    </ViewButton>
    <StatusMenu $gap={4} $after={14} aria-label="阅读模式">
      <Icon color="#22283a">
        <path d="M5.500 1.500h5v13h-5zM0.500 5.500h15v5H0.500z" strokeWidth="1.2" />
      </Icon>
      <Caret />
    </StatusMenu>
    <StatusDivider $h={14} $after={9} />
    <ViewButton $on $after={3} aria-label="普通视图">
      <Icon color="#22283a">
        <path d="M0.500 2.500h15v12H0.500zM5.500 2.500v12M10.500 2.500v12M0.500 6.500h15M0.500 10.500h15" strokeWidth="1.2" />
      </Icon>
    </ViewButton>
    <ViewButton $after={3} aria-label="页面布局视图">
      <Icon color="#22283a">
        <path d="M0.700 0.700h13.800v14.600H0.700zM3.500 3.500h8v9h-8zM7.500 3.500v9" strokeWidth="1.2" />
      </Icon>
    </ViewButton>
    <ViewButton $after={11} aria-label="分页预览">
      <Icon color="#22283a">
        <path d="M0.700 1.700h14.600v12.600H0.700zM5.500 2v7.500M10.500 2v7.500M1 9.500h9.500" strokeWidth="1.2" />
      </Icon>
    </ViewButton>
    <StatusDivider $h={14} $after={10} />
    <StatusMenu $gap={5} $after={11}>100%<Caret /></StatusMenu>
    <button aria-label="缩小">
      <Icon w={11}>
        <path d="M0 5.500h11" strokeWidth="1.8" />
      </Icon>
    </button>
    <ZoomSlider type="range" min="0" max="100" defaultValue="50" aria-label="缩放" />
    <IconButton $w={32} aria-label="放大">
      <Icon w={11}>
        <path d="M0 5.500h11M5.500 0v11" strokeWidth="1.6" />
      </Icon>
    </IconButton>
    <IconButton $w={20} aria-label="全屏">
      <Icon w={14} color="#22283a">
        <path d="M1 5V1h4M9 1h4v4M13 9v4H9M5 13H1V9M1 1l4 4M13 1L9 5M13 13L9 9M1 13l4-4" />
      </Icon>
    </IconButton>
  </StatusBar>
);

/* ---------- site mark ---------- */

const SiteMark = styled.div`
  position: absolute;
  right: 10px;
  bottom: 7px;
  z-index: 2;
  display: flex;
  align-items: center;
  opacity: 0.85;
  pointer-events: none;
`;

const SiteText = styled.div`
  font-size: ${(p) => (p.$url ? 17 : 21)}px;
  font-weight: 700;
  line-height: ${(p) => (p.$url ? 18 : 26)}px;
  font-family: ${(p) => (p.$url ? "'Liberation Sans', sans-serif" : "'Noto Sans CJK SC', sans-serif")};
  font-weight: ${(p) => (p.$url ? 400 : 700)};
  color: ${(p) => (p.$url ? '#53bd6c' : '#4b8fd6')};
  white-space: nowrap;
`;

const SiteMarkView = () => (
  <SiteMark>
    <Icon w={44} h={44} color="none">
      <path d="M43 2C25 1 4 8 1 23c-1 6 3 10 9 9C4 24 15 8 43 2z" fill="#3f8fd8" />
      <path d="M8 30c2-10 12-19 24-16-9 0-16 5-18 12-1 4 1 6 3 6-4 1-9 1-9-2z" fill="#7dbdea" />
      <path d="M30 13c10 0 14 8 8 16-5 7-16 10-26 8 12-1 20-6 22-13 1-5-1-9-4-11z" fill="#52b35c" />
      <path d="M3 39c8 0 16-3 21-9 0 4-3 8-8 9-4 1-9 1-13 0z" fill="#c9dc52" />
    </Icon>
    <div>
      <SiteText>极光下载站</SiteText>
      <SiteText $url>www.xz7.com</SiteText>
    </div>
  </SiteMark>
);

const App = () => (
  <Window>
    <GlobalStyle />
    <TitleBarView />
    <MenuBarView />
    <RibbonView />
    <Workspace>
      <SheetView />
      <PivotPanel />
      <SideRail />
    </Workspace>
    <StatusBarView />
    <SiteMarkView />
  </Window>
);

export default App;
